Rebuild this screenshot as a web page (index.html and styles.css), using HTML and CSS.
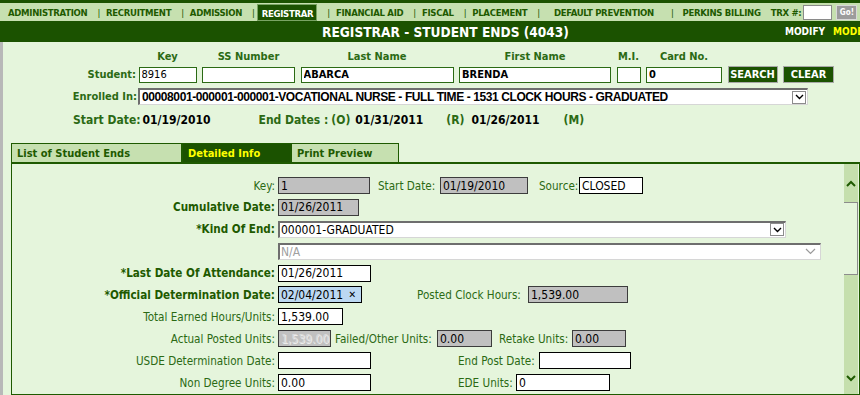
FILE: index.html
```html
<!DOCTYPE html>
<html lang="en">
<head>
  <meta charset="UTF-8">
  <meta name="viewport" content="width=device-width, initial-scale=1.0">
  <title>Registrar - Student Ends</title>
  <link rel="stylesheet" href="styles.css">
</head>
<body>
  <div class="topline"></div>

  <nav class="mainnav">
    <a>ADMINISTRATION</a><span class="sep">|</span>
    <a>RECRUITMENT</a><span class="sep">|</span>
    <a>ADMISSION</a><span class="sep">|</span>
    <a class="active">REGISTRAR</a><span class="sep">|</span>
    <a>FINANCIAL AID</a><span class="sep">|</span>
    <a>FISCAL</a><span class="sep">|</span>
    <a>PLACEMENT</a><span class="sep">|</span>
    <a class="wide">DEFAULT PREVENTION</a><span class="sep">|</span>
    <a>PERKINS BILLING</a>
    <span class="trx">TRX #:</span>
    <input class="trx-input" type="text">
    <button class="go">Go!</button>
  </nav>

  <div class="titlebar">
    <h1>REGISTRAR - STUDENT ENDS (4043)</h1>
    <div class="modes"><span>MODIFY</span><span class="mode">MODE</span></div>
  </div>

  <main class="content">
    <div class="search">
      <span></span>
      <span class="col-head">Key</span>
      <span class="col-head">SS Number</span>
      <span class="col-head">Last Name</span>
      <span class="col-head">First Name</span>
      <span class="col-head">M.I.</span>
      <span class="col-head">Card No.</span>
      <span></span>
      <span></span>

      <label class="lbl">Student:</label>
      <input class="fld plain" type="text" value="8916">
      <input class="fld" type="text" value="">
      <input class="fld" type="text" value="ABARCA">
      <input class="fld" type="text" value="BRENDA">
      <input class="fld" type="text" value="">
      <input class="fld" type="text" value="0">
      <button class="btn">SEARCH</button>
      <button class="btn">CLEAR</button>
    </div>

    <div class="enrolled">
      <label class="lbl">Enrolled In:</label>
      <div class="combo big">
        <span class="combo-text">00008001-000001-000001-VOCATIONAL NURSE - FULL TIME - 1531 CLOCK HOURS - GRADUATED</span>
        <span class="dd"><svg width="9" height="6" viewBox="0 0 9 6"><polyline points="1,1 4.5,4.5 8,1" fill="none" stroke="#000" stroke-width="1.4"/></svg></span>
      </div>
    </div>

    <div class="dates">
      <span class="dlbl">Start Date:</span><span class="dval first">01/19/2010</span>
      <span class="dlbl ends">End Dates :</span>
      <span class="dlbl o">(O)</span><span class="dval">01/31/2011</span>
      <span class="dlbl r">(R)</span><span class="dval wide">01/26/2011</span>
      <span class="dlbl m">(M)</span>
    </div>

    <div class="tabs">
      <div class="tab t1">List of Student Ends</div>
      <div class="tab t2 active">Detailed Info</div>
      <div class="tab t3">Print Preview</div>
    </div>

    <div class="panel">
      <div class="panel-body">
        <div class="frow">
          <span class="flbl">Key:</span>
          <div class="in ro w92">1</div>
          <span class="slbl ml8 w62">Start Date:</span>
          <div class="in ro w88">01/19/2010</div>
          <span class="slbl ml11 w40">Source:</span>
          <div class="in w64">CLOSED</div>
        </div>
        <div class="frow">
          <span class="flbl req">Cumulative Date:</span>
          <div class="in ro w81">01/26/2011</div>
        </div>
        <div class="frow">
          <span class="flbl req">*Kind Of End:</span>
          <div class="combo kind">
            <span class="combo-text">000001-GRADUATED</span>
            <span class="dd"><svg width="9" height="6" viewBox="0 0 9 6"><polyline points="1,1 4.5,4.5 8,1" fill="none" stroke="#000" stroke-width="1.4"/></svg></span>
          </div>
        </div>
        <div class="frow">
          <span class="flbl"></span>
          <div class="combo na">
            <span class="combo-text">N/A</span>
            <span class="chev"><svg width="11" height="7" viewBox="0 0 11 7"><polyline points="1,1 5.5,5.5 10,1" fill="none" stroke="#9a9a9a" stroke-width="1.2"/></svg></span>
          </div>
        </div>
        <div class="frow">
          <span class="flbl req">*Last Date Of Attendance:</span>
          <div class="in w93">01/26/2011</div>
        </div>
        <div class="frow">
          <span class="flbl req">*Official Determination Date:</span>
          <div class="in date w84"><span>02/04/2011</span><span class="clear-x">&#x2715;</span></div>
          <span class="slbl ml55 w111">Posted Clock Hours:</span>
          <div class="in ro w100">1,539.00</div>
        </div>
        <div class="frow">
          <span class="flbl">Total Earned Hours/Units:</span>
          <div class="in w65">1,539.00</div>
        </div>
        <div class="frow">
          <span class="flbl">Actual Posted Units:</span>
          <div class="in ro off w53">1,539.00</div>
          <span class="slbl ml4 w102">Failed/Other Units:</span>
          <div class="in ro w55">0.00</div>
          <span class="slbl ml7 w73">Retake Units:</span>
          <div class="in ro w54">0.00</div>
        </div>
        <div class="frow">
          <span class="flbl">USDE Determination Date:</span>
          <div class="in w93"></div>
          <span class="slbl ml87 w81">End Post Date:</span>
          <div class="in w92"></div>
        </div>
        <div class="frow">
          <span class="flbl">Non Degree Units:</span>
          <div class="in w93">0.00</div>
          <span class="slbl ml87 w58">EDE Units:</span>
          <div class="in w94">0</div>
        </div>
      </div>

      <div class="scrollbar">
        <div class="sb-up"><svg width="10" height="7" viewBox="0 0 10 7"><polyline points="1,6 5,2 9,6" fill="none" stroke="#1e5a00" stroke-width="2"/></svg></div>
        <div class="sb-thumb"></div>
        <div class="sb-down"><svg width="10" height="7" viewBox="0 0 10 7"><polyline points="1,1 5,5 9,1" fill="none" stroke="#1e5a00" stroke-width="2"/></svg></div>
      </div>
    </div>
  </main>
</body>
</html>
```

FILE: styles.css
```css
* {
  box-sizing: border-box;
}

body {
  margin: 0;
  height: 395px;
  overflow: hidden;
  background-color: #e5f5dc;
  font-family: "DejaVu Sans Condensed", "DejaVu Sans", sans-serif;
  font-size: 11px;
  color: #2b6a14;
}

input,
button {
  font: inherit;
}

.topline {
  height: 3px;
  background-color: #1b5200;
}

/* top menu */
.mainnav {
  display: flex;
  align-items: center;
  height: 18px;
  padding-left: 8px;
  background-color: #c6e0b0;
  color: #1e5a00;
  font-size: 9.5px;
  font-weight: bold;
  letter-spacing: -0.3px;
  white-space: nowrap;
  overflow: hidden;
}

.mainnav .sep {
  margin: 0 6px 0 10px;
  font-weight: normal;
}

.mainnav a.active {
  height: 17px;
  margin: 1px 0 0 -4px;
  padding: 3px 3px 0 4px;
  background-color: #1b5200;
  border: 1px solid #7aa464;
  color: #fff;
}

.mainnav a.wide {
  margin: 0 7px 0 8px;
}

.mainnav a:last-of-type {
  margin-left: 3px;
}

.trx {
  margin-left: 10px;
}

.trx-input {
  width: 29px;
  height: 15px;
  margin-left: 2px;
  border: 1px solid #8a8a8a;
  background-color: #fff;
}

.go {
  width: 21px;
  height: 15px;
  margin-left: 4px;
  padding: 0;
  border: 1px solid #d8d8d8;
  background-color: #9c9c9c;
  color: #fff;
  font-size: 8px;
  font-weight: bold;
  letter-spacing: 0;
}

/* title */
.titlebar {
  display: flex;
  align-items: center;
  height: 21px;
  background-color: #1b5200;
  overflow: hidden;
}

.titlebar h1 {
  flex: 1;
  margin: 0;
  padding-left: 106px;
  text-align: center;
  color: #fff;
  font-size: 13.6px;
  font-weight: bold;
}

.modes {
  flex-shrink: 0;
  width: 71px;
  margin-right: 4px;
  color: #fff;
  font-size: 10px;
  font-weight: bold;
  white-space: nowrap;
}

.modes .mode {
  margin-left: 8px;
  color: #ffff00;
}

/* main area */
.content {
  height: 353px;
  border-left: 3px solid #b8b8b8;
}

.search {
  display: grid;
  grid-template-columns: 130px 58px 93px 153px 152px 24px 76px 50px 51px;
  column-gap: 5.5px;
  row-gap: 3px;
  align-items: center;
  padding-top: 8px;
}

.col-head {
  height: 13px;
  text-align: center;
  font-weight: bold;
  color: #2b6a14;
}

.lbl {
  font-weight: bold;
  text-align: right;
  white-space: nowrap;
}

.search .lbl {
  margin-right: -3px;
}

.fld {
  height: 16px;
  padding: 0 2px;
  border: 1px solid #2b6a14;
  background-color: #fff;
  color: #000;
  font-weight: bold;
  font-size: 11px;
}

.fld.plain {
  font-weight: normal;
}

.btn {
  height: 17px;
  padding: 0;
  border: 1px solid #a8a8a8;
  background-color: #1b5200;
  color: #fff;
  font-size: 11px;
  font-weight: bold;
}

.enrolled {
  display: flex;
  align-items: center;
  margin-top: 5px;
}

.enrolled .lbl {
  width: 134px;
  margin-right: 1px;
}

/* dropdowns */
.combo {
  display: flex;
  align-items: center;
  justify-content: space-between;
  height: 17px;
  background-color: #fff;
  border-style: solid;
  border-width: 2px 1px 1px 2px;
  border-color: #6e6e6e #d6d6d6 #d6d6d6 #6e6e6e;
  color: #000;
  white-space: nowrap;
  overflow: hidden;
}

.combo .dd {
  display: flex;
  align-items: center;
  justify-content: center;
  width: 14px;
  height: 13px;
  margin-right: 1px;
  border: 1px solid #8c8c8c;
  background-color: #fff;
}

.combo.big {
  width: 670px;
}

.combo.big .combo-text {
  padding-left: 2px;
  font-family: "Liberation Sans", Arial, sans-serif;
  font-size: 12px;
  font-weight: bold;
  letter-spacing: -0.4px;
}

.combo.kind {
  width: 508px;
  font-size: 12px;
}

.combo.na {
  width: 543px;
  font-size: 12px;
  color: #a0a0a0;
}

.combo-text {
  padding-left: 1px;
}

.combo .chev {
  display: flex;
  margin-right: 4px;
}

.dates {
  display: flex;
  align-items: center;
  height: 13px;
  margin-top: 8px;
  padding-left: 70px;
  font-size: 12px;
  font-weight: bold;
  white-space: nowrap;
}

.dval {
  margin-left: 5px;
  color: #000;
}

.dval.first {
  margin-left: 2px;
}

.dval.wide {
  margin-left: 7px;
}

.dlbl.ends {
  margin-left: 48px;
}

.dlbl.o {
  margin-left: 3px;
}

.dlbl.r {
  margin-left: 23px;
}

.dlbl.m {
  margin-left: 24px;
}

/* tabs */
.tabs {
  display: flex;
  height: 19px;
  margin: 17px 0 0 8px;
}

.tab {
  height: 19px;
  padding: 3px 0 0 5px;
  border: 1px solid #1e5a00;
  border-bottom: none;
  background-color: #c6e0b0;
  font-weight: bold;
  color: #1e5a00;
}

.tab.t1 { width: 171px; }
.tab.t2 { width: 109px; }
.tab.t3 { width: 108px; }

.tab.active {
  background-color: #1b5200;
  color: #ffff00;
}

/* detail panel */
.panel {
  display: flex;
  height: 233px;
  margin-left: 8px;
  border: 1px solid #1e5a00;
  border-top-width: 2px;
}

.panel-body {
  flex: 1;
  padding-top: 13px;
  font-size: 11.6px;
}

.frow {
  display: flex;
  align-items: center;
  height: 17px;
  margin-bottom: 4.9px;
  white-space: nowrap;
}

.flbl {
  width: 263px;
  margin-right: 3px;
  text-align: right;
}

.flbl.req {
  font-weight: bold;
  color: #1e5a00;
}

.slbl {
  flex-shrink: 0;
}

.in {
  flex-shrink: 0;
  display: flex;
  align-items: center;
  height: 17px;
  padding: 0 2px;
  border: 1px solid #000;
  background-color: #fff;
  color: #000;
  font-size: 12px;
  overflow: hidden;
}

.in.ro {
  background-color: #c0c0c0;
  border-color: #3c3c3c;
}

.in.off {
  color: #dadada;
  text-shadow: 1px 1px 0 #ececec;
}

.in.date {
  justify-content: space-between;
  background-color: #bcd8f2;
}

.clear-x {
  margin-right: 3px;
  font-size: 10px;
}

.ml4 { margin-left: 4px; }
.ml7 { margin-left: 7px; }
.ml8 { margin-left: 8px; }
.ml11 { margin-left: 11px; }
.ml55 { margin-left: 55px; }
.ml87 { margin-left: 87px; }

.w40 { width: 40px; }
.w53 { width: 53px; }
.w54 { width: 54px; }
.w55 { width: 55px; }
.w58 { width: 58px; }
.w62 { width: 62px; }
.w64 { width: 64px; }
.w65 { width: 65px; }
.w73 { width: 73px; }
.w81 { width: 81px; }
.w84 { width: 84px; }
.w88 { width: 88px; }
.w92 { width: 92px; }
.w93 { width: 93px; }
.w94 { width: 94px; }
.w100 { width: 100px; }
.w102 { width: 102px; }
.w111 { width: 111px; }

/* scrollbar */
.scrollbar {
  display: flex;
  flex-direction: column;
  width: 14px;
  margin-right: 1px;
  background-color: #c5dfad;
}

.sb-up {
  display: flex;
  align-items: center;
  justify-content: center;
  height: 38px;
}

.sb-thumb {
  height: 73px;
  background-color: #e5f5dc;
  border: 1px solid #8c8c8c;
  border-left: none;
}

.sb-down {
  flex: 1;
  display: flex;
  align-items: flex-end;
  justify-content: center;
  padding-bottom: 12px;
}
```
